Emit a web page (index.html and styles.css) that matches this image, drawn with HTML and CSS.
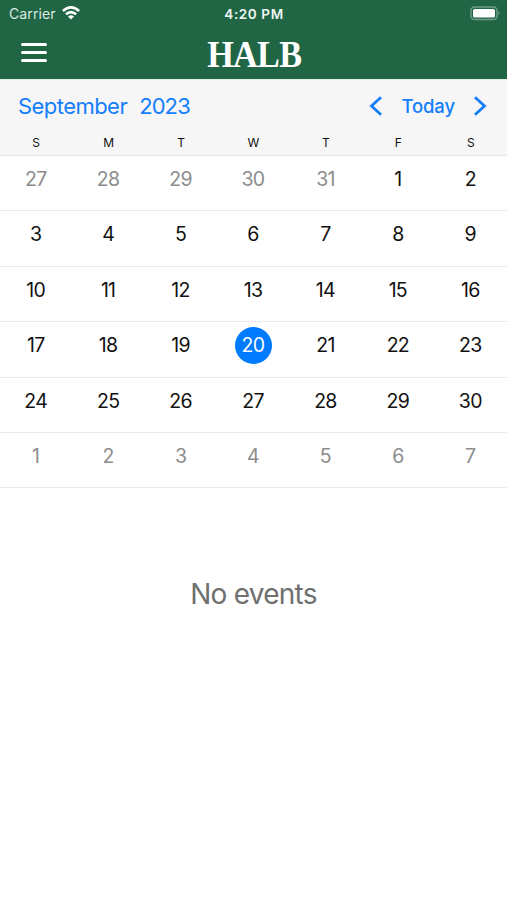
FILE: index.html
```
<!DOCTYPE html>
<html lang="en">
<head>
    <meta charset="UTF-8">
    <meta name="viewport" content="width=device-width, initial-scale=1.0">
    <title>HALB Calendar</title>
    <link rel="stylesheet" href="styles.css">
</head>
<body>

    <!-- Status bar and title -->
    <header class="app-header">
        <div class="status-bar">
            <div class="status-left">
                <span class="carrier">Carrier</span>
                <svg class="wifi" width="18" height="14" viewBox="0 0 18 14" fill="none" stroke="#fff" stroke-width="2.6">
                    <path d="M.9 5Q9-2.2 17.1 5"/>
                    <path d="M3.9 8.3Q9 3.8 14.1 8.3"/>
                    <path d="M6 10.5Q9 7.9 12 10.5L9 13.6Z" fill="#fff" stroke="none"/>
                </svg>
            </div>
            <span class="clock">4:20 PM</span>
            <div class="status-right">
                <svg class="battery" width="31" height="15" viewBox="0 0 31 15">
                    <rect x="1" y="1" width="26" height="12.5" rx="3.5" fill="none" stroke="#fff" stroke-opacity=".35" stroke-width="1.5"/>
                    <rect x="3" y="3" width="22" height="8.5" rx="1.5" fill="#fff"/>
                    <path d="M28.5 5q2 2.2 0 4.5z" fill="#fff" fill-opacity=".45"/>
                </svg>
            </div>
        </div>
        <div class="title-bar">
            <button class="menu-btn" aria-label="Menu">
                <span></span>
                <span></span>
                <span></span>
            </button>
            <h1 class="logo">HALB</h1>
        </div>
    </header>

    <!-- Month navigation -->
    <div class="month-header">
        <div class="month-nav">
            <div class="month-name">
                <span class="month">September</span>
                <span class="year">2023</span>
            </div>
            <div class="nav-buttons">
                <svg width="14" height="20" viewBox="0 0 14 20"><path d="M12 1.3L2.5 10L12 18.7"/></svg>
                <span class="today-btn">Today</span>
                <svg width="14" height="20" viewBox="0 0 14 20"><path d="M2 1.3L11.5 10L2 18.7"/></svg>
            </div>
        </div>
        <div class="weekdays">
            <span>S</span><span>M</span><span>T</span><span>W</span><span>T</span><span>F</span><span>S</span>
        </div>
    </div>

    <!-- Calendar weeks -->
    <div class="calendar">
        <div class="week">
            <span class="other">27</span><span class="other">28</span><span class="other">29</span><span class="other">30</span><span class="other">31</span><span>1</span><span>2</span>
        </div>
        <div class="week">
            <span>3</span><span>4</span><span>5</span><span>6</span><span>7</span><span>8</span><span>9</span>
        </div>
        <div class="week">
            <span>10</span><span>11</span><span>12</span><span>13</span><span>14</span><span>15</span><span>16</span>
        </div>
        <div class="week">
            <span>17</span><span>18</span><span>19</span><span class="selected">20</span><span>21</span><span>22</span><span>23</span>
        </div>
        <div class="week">
            <span>24</span><span>25</span><span>26</span><span>27</span><span>28</span><span>29</span><span>30</span>
        </div>
        <div class="week">
            <span class="other">1</span><span class="other">2</span><span class="other">3</span><span class="other">4</span><span class="other">5</span><span class="other">6</span><span class="other">7</span>
        </div>
    </div>

    <p class="no-events">No events</p>

</body>
</html>
```
FILE: styles.css
```
* {
    box-sizing: border-box;
}

body {
    margin: 0;
    height: 100vh;
    overflow: hidden;
    background: #fff;
    color: #111;
    font-family: Inter, "Liberation Sans", sans-serif;
}

/* Header */
.app-header {
    height: 79px;
    background: #206544;
    color: #fff;
}

.status-bar {
    display: grid;
    grid-template-columns: 1fr auto 1fr;
    align-items: center;
    height: 26px;
    padding: 0 6px 0 9px;
}

.status-left {
    display: flex;
    align-items: center;
    gap: 6px;
}

.carrier {
    font-size: 14px;
    letter-spacing: 0.1px;
    color: #dce9e2;
}

.clock {
    margin-right: 2px;
    padding-top: 1px;
    font-size: 13.5px;
    font-weight: 600;
    letter-spacing: 0.6px;
    color: #eff6f2;
}

.status-right {
    display: flex;
    justify-content: flex-end;
}

.title-bar {
    display: grid;
    grid-template-columns: 1fr auto 1fr;
    align-items: center;
    height: 53px;
    padding: 0 20px 0 21px;
}

.menu-btn {
    display: flex;
    flex-direction: column;
    gap: 5px;
    width: 26px;
    padding: 0;
    border: none;
    background: none;
}

.menu-btn span {
    width: 100%;
    height: 3px;
    border-radius: 2px;
    background: #fff;
}

/* narrow display lettering */
.logo {
    margin: 0;
    padding-top: 3px;
    font-family: "Liberation Serif", serif;
    font-size: 38px;
    font-weight: bold;
    letter-spacing: -0.8px;
    line-height: 50px;
    transform: scaleX(0.9);
}

/* Month navigation */
.month-header {
    height: 77px;
    background: #f6f6f6;
    border-top: 1px solid #e4f0ea;
    border-bottom: 1px solid #e6e6e6;
}

.month-nav {
    display: flex;
    align-items: center;
    justify-content: space-between;
    height: 53px;
    padding: 0 20px 0 18px;
    color: #147efb;
}

.month-name {
    display: flex;
    gap: 12px;
    padding-bottom: 2px;
    font-size: 22px;
    letter-spacing: -0.55px;
}

.month-name .year {
    letter-spacing: -0.9px;
}

.nav-buttons {
    display: flex;
    align-items: center;
    gap: 18px;
}

.nav-buttons svg {
    margin-bottom: 2px;
    fill: none;
    stroke: #147efb;
    stroke-width: 2.8;
}

.today-btn {
    padding-bottom: 1px;
    font-size: 18.5px;
    font-weight: 500;
    letter-spacing: -0.1px;
}

.weekdays {
    display: grid;
    grid-template-columns: repeat(7, 1fr);
    font-size: 12px;
    line-height: 20px;
    text-align: center;
}

/* Calendar */
.week {
    display: grid;
    grid-template-columns: repeat(7, 1fr);
    justify-items: center;
    height: 55.4px;
    padding-top: 5px;
    border-bottom: 1px solid #e9e9e9;
}

.week span {
    width: 37px;
    height: 37px;
    padding-right: 1px;
    border-radius: 50%;
    font-size: 19.5px;
    letter-spacing: -0.7px;
    line-height: 36.5px;
    text-align: center;
}

.week .other {
    color: #8c8c8c;
}

.week .selected {
    background: #007aff;
    color: #fff;
}

.no-events {
    margin: 88px 0 0;
    font-size: 28px;
    letter-spacing: -0.75px;
    line-height: 36px;
    text-align: center;
    color: #707070;
}
```
